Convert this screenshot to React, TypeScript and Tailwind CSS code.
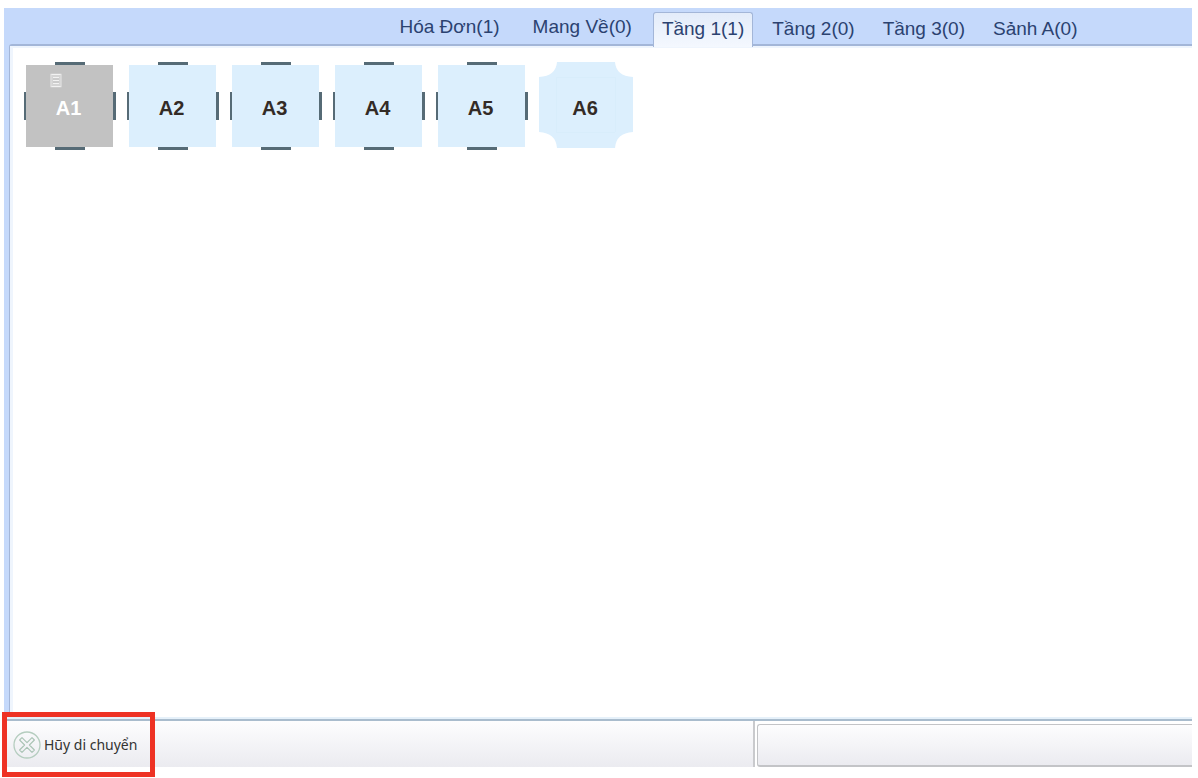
const squareTables = [
  { name: "A1", busy: true },
  { name: "A2", busy: false },
  { name: "A3", busy: false },
  { name: "A4", busy: false },
  { name: "A5", busy: false },
];

const orderTabs = ["Hóa Đơn(1)", "Mang Về(0)"];
const areaTabs = ["Tầng 1(1)", "Tầng 2(0)", "Tầng 3(0)", "Sảnh A(0)"];

function Tab({ label, active = false, raised = false }: { label: string; active?: boolean; raised?: boolean }) {
  const look = active
    ? "-mb-[3px] rounded-t-[3px] border-[#a3b6d8] bg-linear-to-b from-[#e3ecfa] to-[#f4f8fe] pb-[3px]"
    : "border-transparent";
  return (
    <button
      type="button"
      role="tab"
      aria-selected={active}
      className={`flex items-center border border-b-0 px-2 text-[19px] leading-6 whitespace-nowrap text-[#2b4270] ${raised ? "pb-[3px]" : ""} ${look}`}
    >
      {label}
    </button>
  );
}

function OrderIcon() {
  return (
    <svg viewBox="0 0 12 15" className="absolute top-2 left-6 h-[15px] w-3" aria-hidden="true">
      <rect x="0.5" y="0.5" width="11" height="14" fill="#d4d4d4" />
      <path d="M1 1.5h10M3 4.5h6M3 7.5h6M3 10.5h6M1 13.5h10" stroke="#f2f2f2" strokeWidth="1.2" />
      <path d="M1 1v13M11 1v13" stroke="#e0e0e0" strokeWidth="1" />
      <path d="M3 6h6M3 9h6" stroke="#bdbdbd" strokeWidth="0.8" />
    </svg>
  );
}

function SquareTable({ name, busy }: { name: string; busy: boolean }) {
  return (
    <button type="button" className="flex w-[92px] flex-col items-center">
      <span className="h-[3px] w-[30px] bg-[#566b76]" />
      <span className="flex w-full items-center">
        <span className="h-7 w-0.5 bg-[#566b76]" />
        <span
          className={`relative flex h-[82px] flex-1 items-center justify-center pt-1 pr-0.5 text-xl leading-6 font-bold ${
            busy ? "bg-[#c2c2c2] text-white" : "bg-[#dceffd] text-[#332b26]"
          }`}
        >
          {busy && <OrderIcon />}
          {name}
        </span>
        <span className="h-7 w-[3px] bg-[#566b76]" />
      </span>
      <span className="h-[3px] w-[30px] bg-[#566b76]" />
    </button>
  );
}

function RoundTable({ name }: { name: string }) {
  return (
    <button
      type="button"
      className="relative flex h-[86px] w-[94px] items-center justify-center pt-1.5 pr-0.5 text-xl leading-6 font-bold text-[#332b26]"
    >
      <svg viewBox="0 0 94 86" className="absolute inset-0 h-full w-full" aria-hidden="true">
        <path
          d="M18 0H76Q77 14 94 15V70Q77 71 76 86H18Q17 71 0 70V15Q17 14 18 0Z"
          fill="#dceffd"
        />
        <path d="M17 15.5H76M17 70.5H76M17.5 15V70M76.5 15V70" stroke="#d8edfb" strokeWidth="1" fill="none" />
      </svg>
      <span className="relative">{name}</span>
    </button>
  );
}

function CancelIcon() {
  return (
    <svg viewBox="0 0 28 28" className="h-7 w-7 shrink-0" fill="none" aria-hidden="true">
      <circle cx="14" cy="14" r="13" stroke="#b5cdbf" strokeWidth="1.3" />
      <path
        d="M9 6.6L14 11.6L19 6.6L21.4 9L16.4 14L21.4 19L19 21.4L14 16.4L9 21.4L6.6 19L11.6 14L6.6 9Z"
        stroke="#a9c3b4"
        strokeWidth="1.1"
        strokeLinejoin="round"
      />
    </svg>
  );
}

export default function App() {
  return (
    <div className="flex min-h-screen flex-col bg-white pt-2 pr-1.5 pb-[11px] pl-1 font-['Liberation_Sans',Arial,sans-serif]">
      <div className="flex flex-1 flex-col bg-[#c5d9fb] pl-[5px]">
        <nav role="tablist" className="z-10 flex h-9 items-stretch justify-center gap-3 pt-1 pl-[276px]">
          <div className="flex gap-[15px]">
            {orderTabs.map((label) => (
              <Tab key={label} label={label} raised />
            ))}
          </div>
          <div className="flex gap-2.5">
            {areaTabs.map((label, i) => (
              <Tab key={label} label={label} active={i === 0} />
            ))}
          </div>
        </nav>
        <main className="flex flex-1 rounded-tl-[3px] border-t-2 border-l border-[#a3b6d8] bg-white">
          <div className="flex-1 border-t-2 border-l-[3px] border-[#eff5fd] pt-3.5 pl-[11px]">
            <div className="flex flex-wrap gap-[11px]">
              {squareTables.map((table) => (
                <SquareTable key={table.name} name={table.name} busy={table.busy} />
              ))}
              <RoundTable name="A6" />
            </div>
          </div>
        </main>
      </div>
      <footer className="flex h-[50px] border-t-2 border-[#e6f1fa]">
        <div className="flex flex-1 border-t-2 border-[#a9bccd]">
          <div className="relative flex w-[751px] items-stretch border-r-2 border-[#c9cacd] bg-linear-to-b from-[#fdfdfe] to-[#ebebf0]">
            <button
              type="button"
              className="relative flex items-center gap-[3px] pt-px pl-[9px] font-['Noto_Sans',sans-serif] text-sm whitespace-nowrap text-[#333333]"
            >
              <CancelIcon />
              Hũy di chuyển
            </button>
            <div className="pointer-events-none absolute -top-[9px] -left-0.5 h-[65px] w-[153px] border-[5px] border-[#ee3224]" />
          </div>
          <div className="mt-[3px] ml-0.5 flex-1 rounded-l-[3px] border border-r-0 border-b-2 border-[#c3c4c7] bg-linear-to-b from-[#fdfdfe] to-[#ebebf0]" />
        </div>
      </footer>
    </div>
  );
}
